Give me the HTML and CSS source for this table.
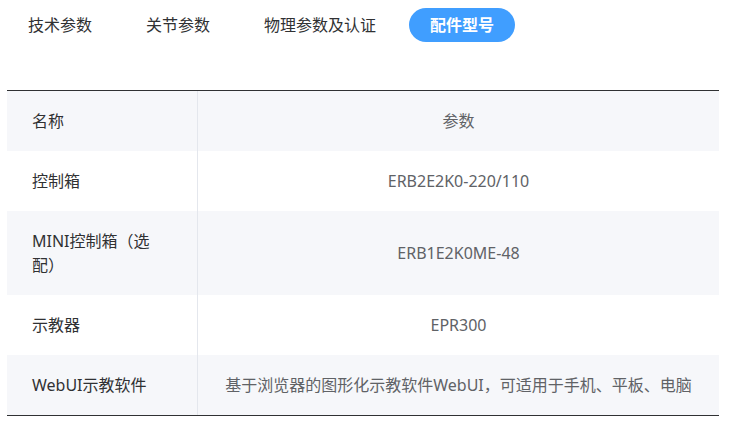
FILE: index.html
```html
<!DOCTYPE html>
<html lang="zh-CN">
<head>
  <meta charset="UTF-8">
  <meta name="viewport" content="width=device-width, initial-scale=1.0">
  <title>配件型号</title>
  <link rel="stylesheet" href="styles.css">
</head>
<body>
  <!-- Tabs -->
  <ul class="tabs">
    <li class="tab">技术参数</li>
    <li class="tab">关节参数</li>
    <li class="tab">物理参数及认证</li>
    <li class="tab active">配件型号</li>
  </ul>

  <!-- Parts table -->
  <table class="spec-table">
    <colgroup>
      <col class="col-name">
      <col>
    </colgroup>
    <tbody>
      <tr class="stripe">
        <td class="name">名称</td>
        <td class="value">参数</td>
      </tr>
      <tr>
        <td class="name">控制箱</td>
        <td class="value">ERB2E2K0-220/110</td>
      </tr>
      <tr class="stripe">
        <td class="name">MINI控制箱（选配）</td>
        <td class="value">ERB1E2K0ME-48</td>
      </tr>
      <tr>
        <td class="name">示教器</td>
        <td class="value">EPR300</td>
      </tr>
      <tr class="stripe">
        <td class="name">WebUI示教软件</td>
        <td class="value">基于浏览器的图形化示教软件WebUI，可适用于手机、平板、电脑</td>
      </tr>
    </tbody>
  </table>
</body>
</html>
```

FILE: styles.css
```css
/* General */
body {
  margin: 0;
  font-family: "Noto Sans", "Noto Sans CJK SC", sans-serif;
  font-size: 16px;
  color: #303133;
  background: #fff;
}

/* Tabs */
.tabs {
  list-style: none;
  display: flex;
  gap: 12px;
  margin: 0;
  padding: 8px 0 0 7px;
}

.tabs .tab {
  height: 34px;
  line-height: 34px;
  padding: 0 21px;
  border-radius: 17px;
  color: #303133;
  white-space: nowrap;
}

.tabs .tab.active {
  background-color: #409eff;
  color: #fff;
  font-weight: 600;
}

/* Table */
.spec-table {
  width: 712px;
  margin: 48px 0 0 7px;
  table-layout: fixed;
  border-collapse: separate;
  border-spacing: 0;
  border-top: 1px solid #303133;
  border-bottom: 1px solid #303133;
}

.spec-table .col-name {
  width: 191px;
}

.spec-table td {
  padding: 18px 0;
  line-height: 24px;
}

.spec-table tr.stripe td {
  background-color: #f6f7fa;
}

.spec-table td.name {
  padding-left: 25px;
  padding-right: 41px;
  border-right: 1px solid #e4e7ed;
  color: #303133;
}

.spec-table td.value {
  text-align: center;
  color: #606266;
}
```
